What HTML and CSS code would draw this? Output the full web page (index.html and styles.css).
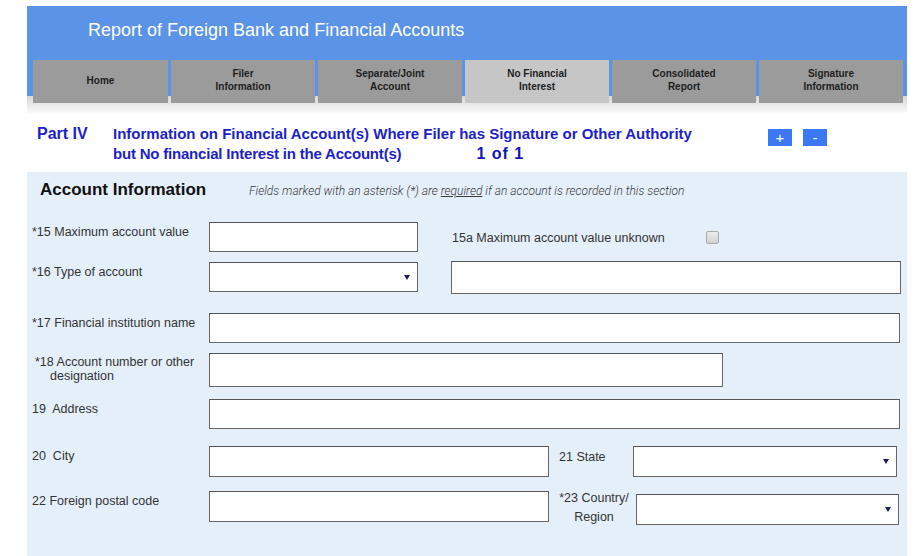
FILE: index.html
```html
<!DOCTYPE html>
<html lang="en">

<head>
  <meta charset="UTF-8" />
  <meta name="viewport" content="width=device-width, initial-scale=1.0" />
  <title>Report of Foreign Bank and Financial Accounts</title>
  <link rel="stylesheet" href="styles.css">
</head>

<body>
  <div class="page">
    <div class="banner">
      <h1 class="banner-title">Report of Foreign Bank and Financial Accounts</h1>
      <nav class="tabs">
        <a class="tab tab-home">Home</a>
        <a class="tab">Filer<br>Information</a>
        <a class="tab">Separate/Joint<br>Account</a>
        <a class="tab active">No Financial<br>Interest</a>
        <a class="tab">Consolidated<br>Report</a>
        <a class="tab">Signature<br>Information</a>
      </nav>
    </div>

    <div class="part-head">
      <div class="part-no">Part IV</div>
      <div class="part-title">
        <div>Information on Financial Account(s) Where Filer has Signature or Other Authority</div>
        <div class="part-sub">but No financial Interest in the Account(s) <span class="counter">1 of 1</span></div>
      </div>
      <div class="part-actions">
        <button class="mini-btn">+</button>
        <button class="mini-btn">-</button>
      </div>
    </div>

    <div class="section">
      <div class="section-head">
        <h2>Account Information</h2>
        <p class="note">Fields marked with an asterisk (*) are <u>required</u> if an account is recorded in this section</p>
      </div>

      <div class="row">
        <label class="label">*15 Maximum account value</label>
        <div class="field w-sm"></div>
        <span class="side-label">15a Maximum account value unknown</span>
        <span class="checkbox"></span>
      </div>

      <div class="row gap-lg">
        <label class="label">*16 Type of account</label>
        <div class="field w-sm select"></div>
        <div class="field w-other"></div>
      </div>

      <div class="row">
        <label class="label">*17 Financial institution name</label>
        <div class="field w-full"></div>
      </div>

      <div class="row gap-md">
        <label class="label hang">*18 Account number or other designation</label>
        <div class="field w-acct"></div>
      </div>

      <div class="row gap-xl">
        <label class="label">19&nbsp; Address</label>
        <div class="field w-full"></div>
      </div>

      <div class="row gap-sm">
        <label class="label">20&nbsp; City</label>
        <div class="field w-half"></div>
        <label class="label-mid state">21 State</label>
        <div class="field select w-state"></div>
      </div>

      <div class="row">
        <label class="label">22 Foreign postal code</label>
        <div class="field w-half"></div>
        <label class="label-mid country">*23 Country/<br>Region</label>
        <div class="field select w-country"></div>
      </div>
    </div>
  </div>
</body>

</html>
```

FILE: styles.css
```css
body {
  margin: 0;
  background: white;
  font-family: 'Liberation Sans', Arial, sans-serif;
  color: #333;
  overflow: hidden;
}

.page {
  width: 880px;
  margin: 6px 0 0 27px;
}

.banner {
  background: linear-gradient(to bottom, #5b93e6 0, #5b93e6 90px, #d6d6d6 90px, #fafafa 107px);
  height: 107px;
}

.banner-title {
  margin: 0;
  height: 54px;
  box-sizing: border-box;
  padding: 13px 0 0 61px;
  font-size: 18px;
  line-height: 22px;
  font-weight: normal;
  color: white;
}

.tabs {
  display: flex;
  gap: 3px;
  padding-left: 6px;
}

.tab {
  width: 144px;
  height: 43px;
  box-sizing: border-box;
  padding-bottom: 3px;
  display: flex;
  align-items: center;
  justify-content: center;
  text-align: center;
  background: #9b9b9b;
  color: #1e1e1e;
  font-size: 10px;
  line-height: 13px;
  font-weight: bold;
}

.tab-home {
  width: 135px;
}

.tab.active {
  background: #c6c6c6;
}

.part-head {
  display: flex;
  height: 59px;
  box-sizing: border-box;
  padding: 11px 0 0 10px;
  background: white;
  color: #1c22c8;
  font-weight: bold;
}

.part-no {
  width: 76px;
  font-size: 16px;
  line-height: 20px;
}

.part-title {
  width: 655px;
  font-size: 15px;
  line-height: 20px;
}

.part-sub {
  display: flex;
  align-items: baseline;
  letter-spacing: -0.2px;
}

.counter {
  margin-left: 75px;
  font-size: 16px;
  letter-spacing: 1px;
  color: #1515b5;
}

.part-actions {
  display: flex;
  gap: 11px;
  padding-top: 5px;
}

.mini-btn {
  width: 24px;
  height: 17px;
  padding: 0;
  border: none;
  background: #3a78f5;
  color: white;
  font-family: 'Liberation Sans', Arial, sans-serif;
  font-size: 15px;
  line-height: 17px;
}

.section {
  background: #e5effa;
  padding: 8px 0 40px 5px;
}

.section-head {
  display: flex;
  align-items: baseline;
  margin-bottom: 22px;
}

.section-head h2 {
  margin: 0 0 0 8px;
  width: 209px;
  font-size: 17px;
  line-height: 20px;
  color: #111;
}

.note {
  margin: 0;
  font-family: Roboto, 'Liberation Sans', sans-serif;
  font-weight: 300;
  font-style: italic;
  font-size: 12px;
  color: #3a3a3a;
}

.row {
  display: flex;
  align-items: flex-start;
  margin-bottom: 10px;
}

.row.gap-sm {
  margin-bottom: 14px;
}

.row.gap-md {
  margin-bottom: 12px;
}

.row.gap-xl {
  margin-bottom: 17px;
}

.row.gap-lg {
  margin-bottom: 19px;
}

.label {
  width: 177px;
  flex: none;
  padding-top: 2px;
  font-size: 12.5px;
  line-height: 16px;
}

.label.hang {
  width: 159px;
  padding-left: 18px;
  text-indent: -15px;
  line-height: 14px;
}

.field {
  height: 30px;
  box-sizing: border-box;
  border: 1px solid #666;
  border-top-color: #555;
  background: #fefefe;
  flex: none;
}

.w-sm {
  width: 209px;
}

.w-other {
  width: 450px;
  height: 33px;
  margin: -1px 0 0 33px;
}

.w-full {
  width: 691px;
}

.w-acct {
  width: 514px;
  height: 34px;
}

.w-half {
  width: 340px;
  height: 31px;
}

.w-state {
  width: 264px;
  height: 31px;
}

.w-country {
  width: 263px;
  height: 31px;
  margin-top: 3px;
}

.select {
  display: flex;
  align-items: center;
  justify-content: flex-end;
  padding-right: 7px;
}

.select::after {
  content: "";
  border-left: 3px solid transparent;
  border-right: 3px solid transparent;
  border-top: 5px solid #1b1b5e;
}

.side-label {
  margin: 9px 0 0 34px;
  width: 254px;
  font-size: 12.5px;
  line-height: 14px;
}

.checkbox {
  width: 11px;
  height: 11px;
  margin-top: 9px;
  border: 1px solid #aaa;
  border-radius: 2px;
  background: linear-gradient(#ececec, #d2d2d2);
}

.label-mid {
  flex: none;
  font-size: 12.5px;
  line-height: 19px;
  text-align: center;
}

.state {
  margin: 2px 0 0 10px;
  width: 74px;
  text-align: left;
}

.country {
  margin: -2px 0 0 8px;
  width: 74px;
}

.w-country {
  margin-left: 5px;
}
```
